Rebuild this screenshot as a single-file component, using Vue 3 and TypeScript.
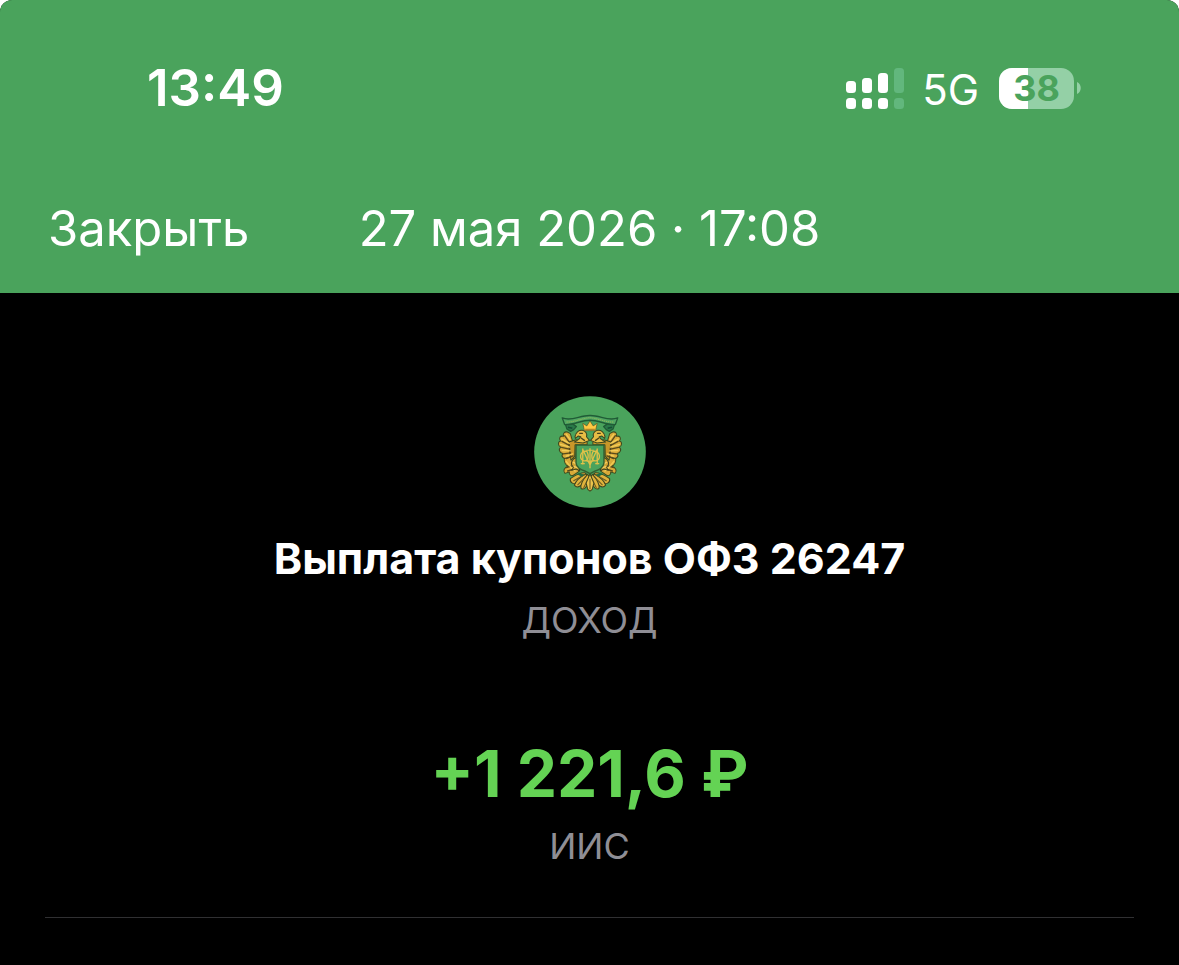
<script setup lang="ts">
interface SignalBar {
  x: number
  y: number
  height: number
  active: boolean
}

const signalBars: SignalBar[] = [
  { x: 0, y: 13, height: 12, active: true },
  { x: 16, y: 10, height: 15, active: true },
  { x: 32, y: 5, height: 20, active: true },
  { x: 48, y: 0, height: 25, active: false },
]

const battery = 38

const operation = {
  date: '27 мая 2026 · 17:08',
  title: 'Выплата купонов ОФЗ 26247',
  kind: 'ДОХОД',
  amount: '+1 221,6 ₽',
  account: 'ИИС',
}
</script>

<template>
  <div class="screen">
    <header class="header">
      <div class="status">
        <time class="clock">13:49</time>
        <div class="indicators">
          <svg class="signal" viewBox="0 0 58 41" aria-hidden="true">
            <g v-for="bar in signalBars" :key="bar.x" :fill="bar.active ? '#fff' : '#62b77d'">
              <rect :x="bar.x" :y="bar.y" width="10" :height="bar.height" rx="3.5" />
              <rect :x="bar.x" y="30" width="10" height="11" rx="3.5" />
            </g>
          </svg>
          <span class="network">5G</span>
          <div class="battery">
            <div class="cell">
              <div class="charge" :style="{ width: battery + '%' }"></div>
              <span class="percent">{{ battery }}</span>
            </div>
            <svg class="tip" viewBox="0 0 4 12" aria-hidden="true">
              <path d="M0 0C5 2 5 10 0 12Z" fill="#94d0a6" />
            </svg>
          </div>
        </div>
      </div>
      <nav class="bar">
        <button class="close" type="button">Закрыть</button>
        <h1 class="date">{{ operation.date }}</h1>
      </nav>
    </header>

    <main class="content">
      <svg class="emblem" viewBox="29 19 333 333" role="img" aria-label="Герб">
        <defs>
          <g id="crest-half" stroke-linejoin="round" stroke-linecap="round">
            <!-- wing -->
            <g fill="#d9aa38" stroke="#3c4a1f" stroke-width="3">
              <path d="M128 126C119 124 114 132 117 139C107 136 101 145 108 153C99 155 100 168 109 171C100 177 105 189 115 190C108 198 117 208 128 204C121 213 129 223 139 216L153 202L155 157L143 151L137 131Z" />
              <path d="M119 205C118 215 123 225 131 228C119 231 114 242 121 249L134 245C132 254 142 260 150 252L163 243L153 220L146 199Z" />
              <path d="M132 156L155 149L187 155V164H151L150 198L139 210L135 184Z" fill="#c99729" />
            </g>
            <path d="M120 137L132 154M112 154L134 166M111 172L134 177M116 191L138 188M125 205L145 197M133 154L137 198M125 232L145 226M129 242L151 235" fill="none" stroke="#574a1c" stroke-width="4" />
            <path d="M125 133L136 148M112 147L134 160M108 163L135 171M113 181L137 182M125 198L144 191M125 214L139 231L151 242" fill="none" stroke="#f2cd57" stroke-width="4" />
            <!-- head and neck -->
            <path d="M151 139C153 127 163 119 173 121C183 123 188 132 185 140L194 151L175 159L149 156L162 148L168 140L160 138L152 145Z" fill="#e8bd45" stroke="#3b461e" stroke-width="3" />
            <path d="M165 130H173M169 144L179 151" stroke="#4b451d" stroke-width="4" />
            <!-- claw -->
            <path d="M151 203C139 210 136 225 147 230L141 240L154 236L165 241L162 227C171 220 163 209 157 205Z" fill="#d2a333" stroke="#3e431e" stroke-width="3" />
            <path d="M146 216L158 223M148 229L158 232" stroke="#f4cf62" stroke-width="4" />
            <!-- tail -->
            <g fill="#e0b33c" stroke="#3f451e" stroke-width="3">
              <path d="M181 247C160 246 149 257 137 265C135 277 148 284 158 277L184 256Z" />
              <path d="M184 250C167 259 153 271 149 284C158 296 173 287 187 259Z" />
              <path d="M188 252C173 269 166 283 169 294C179 300 188 289 194 260Z" />
            </g>
            <path d="M178 253L147 271M183 259L159 283M190 266L177 291" fill="none" stroke="#6a5922" stroke-width="3" />
            <path d="M164 247L178 253L171 259L157 252Z" fill="#216e45" />
          </g>
        </defs>

        <circle cx="195.500" cy="185.500" r="166" fill="#4aa35c" />
        <use href="#crest-half" />
        <use href="#crest-half" transform="translate(391 0) scale(-1 1)" />
        <path d="M195.500 250L184 278L189 297L195.500 302L202 297L207 278Z" fill="#ebc34c" stroke="#3f451e" stroke-width="3" />
        <path d="M195.500 265V296" stroke="#6a5922" stroke-width="3" />

        <!-- crown -->
        <path d="M179 122L174 100L186 108L195.500 93L205 108L217 100L212 122Z" fill="#ffc842" stroke="#5b5022" stroke-width="2" />
        <path d="M181 118H210" stroke="#a37825" stroke-width="3" />

        <!-- shield -->
        <path d="M154 165H237V217C237 231 221 240 211 242L195.500 250L180 242C170 240 154 231 154 217Z" fill="#4aa35c" stroke="#315e31" stroke-width="4" />
        <g fill="none" stroke="#dfc148" stroke-width="4">
          <path d="M174 175V223M217 175V223M174 178L195.500 224L217 178M195.500 174V234M168 220H180M211 220H223" />
          <path d="M187 184C163 178 161 214 181 212C191 211 192 196 187 184M204 184C228 178 230 214 210 212C200 211 199 196 204 184" />
          <path d="M184 180H207M185 213H206" stroke-width="3" />
        </g>

        <!-- ribbon -->
        <g stroke="#205b36" stroke-width="4" stroke-linejoin="round">
          <path d="M121 99L127 117L138 124L147 119L155 110L144 102Z" fill="#2a7a48" />
          <path d="M270 99L264 117L253 124L244 119L236 110L247 102Z" fill="#2a7a48" />
          <path d="M113 84C140 96 166 76 195.500 77C225 76 251 96 278 84L271 104C246 106 222 91 195.500 91C169 91 145 106 120 104Z" fill="#4fa662" />
        </g>
        <path d="M126 96C151 98 174 83 195.500 84C217 83 240 98 265 96" fill="none" stroke="#a4b957" stroke-width="3" stroke-dasharray="3 3" />
        <path d="M130 112L143 115M261 112L248 115" stroke="#164e34" stroke-width="5" />
      </svg>

      <h2 class="title">{{ operation.title }}</h2>
      <p class="caption">{{ operation.kind }}</p>
      <p class="amount">{{ operation.amount }}</p>
      <p class="caption">{{ operation.account }}</p>
      <hr class="divider" />
    </main>
  </div>
</template>

<style>
body {
  margin: 0;
  background: #fff;
}
</style>

<style scoped>
.screen {
  display: flex;
  flex-direction: column;
  min-height: 100vh;
  overflow: hidden;
  border-radius: 12px 12px 0 0;
  background: #000;
  color: #fff;
  font-family: Inter, "Liberation Sans", sans-serif;
}

.header {
  box-sizing: border-box;
  padding: 57px 48px 34px;
  background: #4aa35c;
}

.status {
  display: flex;
  align-items: center;
  justify-content: space-between;
  padding: 0 50px 0 99px;
}

.clock {
  font-size: 51px;
  font-weight: 600;
  line-height: 62px;
}

.indicators {
  display: flex;
  align-items: center;
}

.signal {
  width: 58px;
  height: 41px;
}

.network {
  margin: 4px 20px 0 18px;
  font-size: 42px;
  line-height: 48px;
}

.battery {
  display: flex;
  align-items: center;
  gap: 3px;
}

.cell {
  display: grid;
  width: 75px;
  height: 41px;
  border-radius: 13px;
  background: #94d0a6;
}

.charge,
.percent {
  grid-area: 1 / 1;
}

.charge {
  border-radius: 13px 0 0 13px;
  background: #fff;
}

.percent {
  color: #4aa35c;
  font-size: 36px;
  font-weight: 700;
  line-height: 41px;
  text-align: center;
}

.tip {
  width: 4px;
  height: 12px;
}

.bar {
  display: grid;
  grid-template-columns: 1fr auto 1fr;
  align-items: center;
  margin-top: 80px;
}

.close {
  justify-self: start;
  padding: 0;
  border: 0;
  background: none;
  color: inherit;
  font: inherit;
  font-size: 49px;
  line-height: 60px;
  cursor: pointer;
}

.date {
  margin: 0;
  font-size: 49px;
  font-weight: 400;
  line-height: 60px;
}

.content {
  display: flex;
  flex-direction: column;
  align-items: center;
  padding: 103px 45px 46px;
}

.emblem {
  width: 112px;
  height: 112px;
}

.title {
  margin: 24px 0 0;
  font-size: 43px;
  font-weight: 700;
  line-height: 52px;
}

.caption {
  margin: 12px 0 0;
  color: #8f8e95;
  font-size: 36px;
  line-height: 48px;
}

.amount {
  margin: 90px 0 0;
  color: #64d354;
  font-size: 64px;
  font-weight: 700;
  line-height: 80px;
}

.amount + .caption {
  margin-top: 8px;
}

.divider {
  width: 100%;
  height: 1px;
  margin: 47px 0 0;
  border: 0;
  background: #303032;
}
</style>
